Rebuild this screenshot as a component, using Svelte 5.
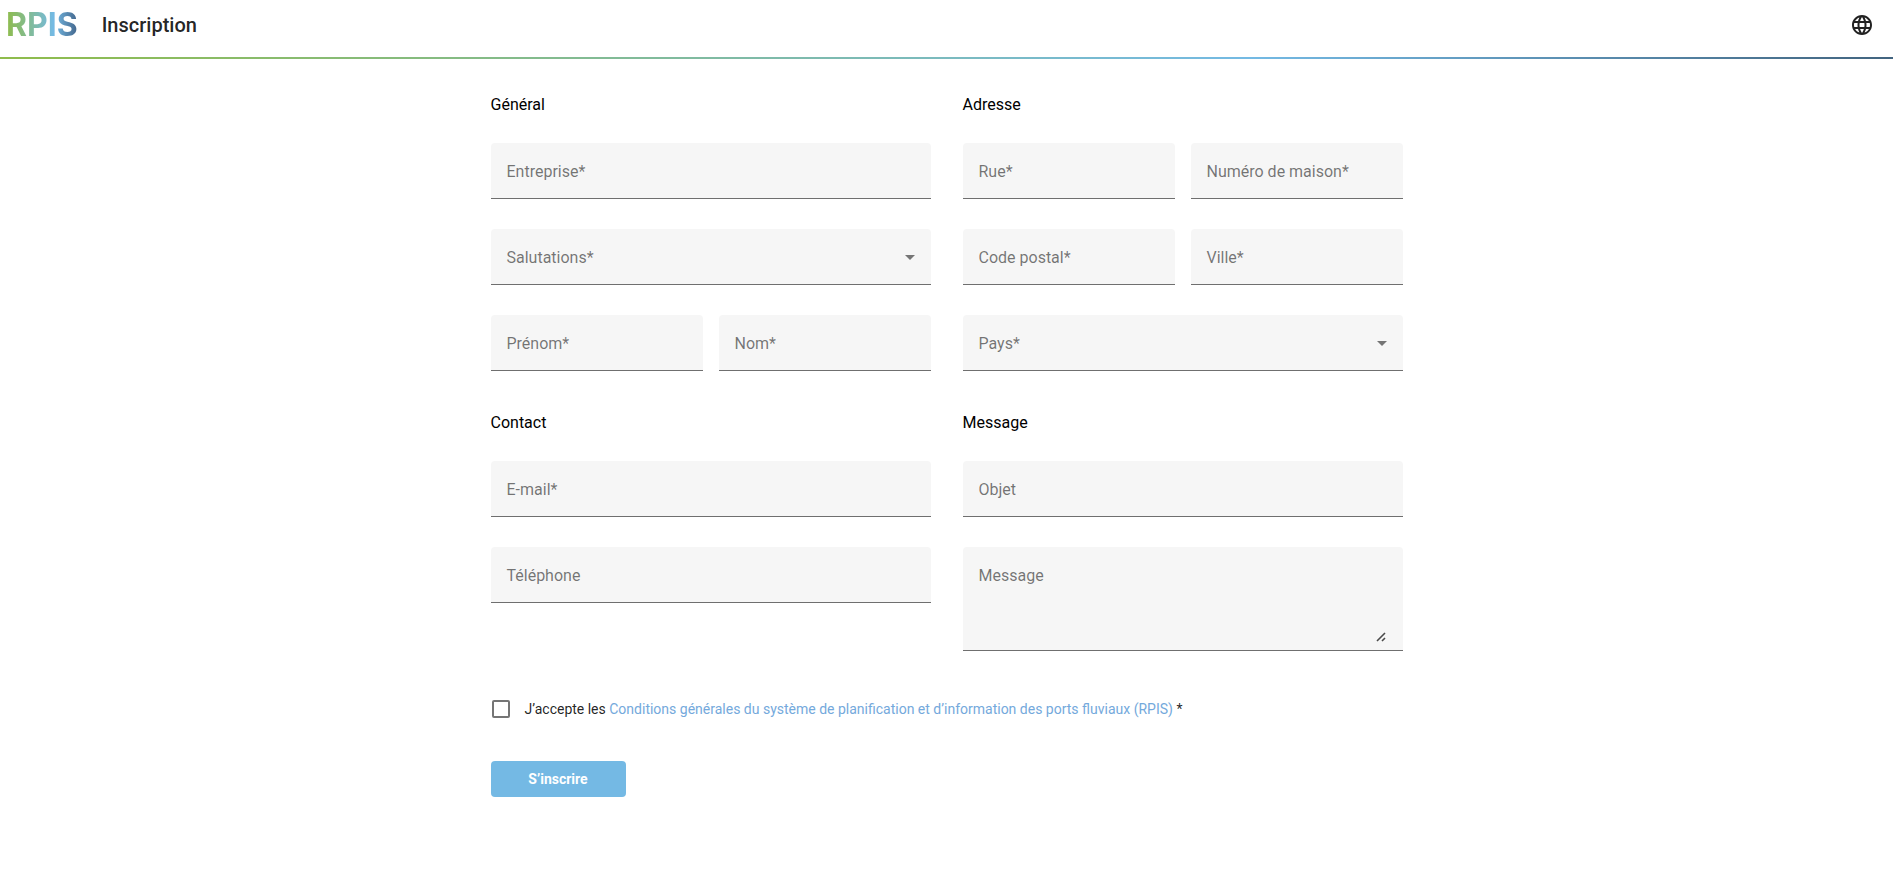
<script>
    const sections = [
        {
            title: 'Général',
            fields: [
                { id: 'company', label: 'Entreprise*' },
                { id: 'salutation', label: 'Salutations*', type: 'select', options: ['Madame', 'Monsieur'] },
                { id: 'firstName', label: 'Prénom*', half: true },
                { id: 'lastName', label: 'Nom*', half: true }
            ]
        },
        {
            title: 'Adresse',
            fields: [
                { id: 'street', label: 'Rue*', half: true },
                { id: 'houseNumber', label: 'Numéro de maison*', half: true },
                { id: 'zip', label: 'Code postal*', half: true },
                { id: 'city', label: 'Ville*', half: true },
                { id: 'country', label: 'Pays*', type: 'select', options: ['Allemagne', 'France', 'Suisse'] }
            ]
        },
        {
            title: 'Contact',
            fields: [
                { id: 'email', label: 'E-mail*' },
                { id: 'phone', label: 'Téléphone' }
            ]
        },
        {
            title: 'Message',
            fields: [
                { id: 'subject', label: 'Objet' },
                { id: 'message', label: 'Message', type: 'textarea' }
            ]
        }
    ];

    let values = $state({
        company: '', salutation: '', firstName: '', lastName: '',
        street: '', houseNumber: '', zip: '', city: '', country: '',
        email: '', phone: '', subject: '', message: ''
    });
    let accepted = $state(false);
</script>

<header class="toolbar">
    <a class="logo" href="/">RPIS</a>
    <h1>Inscription</h1>
    <button class="language" type="button" aria-label="Langue">
        <svg viewBox="0 0 24 24" width="24" height="24">
            <path d="M11.99 2C6.47 2 2 6.48 2 12s4.47 10 9.99 10C17.52 22 22 17.52 22 12S17.52 2 11.99 2zm6.93 6h-2.95c-.32-1.25-.78-2.45-1.38-3.56 1.84.63 3.37 1.91 4.33 3.56zM12 4.04c.83 1.2 1.48 2.53 1.91 3.96h-3.82c.43-1.43 1.08-2.76 1.91-3.96zM4.26 14C4.1 13.36 4 12.69 4 12s.1-1.36.26-2h3.38c-.08.66-.14 1.32-.14 2s.06 1.34.14 2H4.26zm.82 2h2.95c.32 1.25.78 2.45 1.38 3.56-1.84-.63-3.37-1.9-4.33-3.56zm2.95-8H5.08c.96-1.66 2.49-2.93 4.33-3.56C8.81 5.55 8.35 6.75 8.03 8zM12 19.96c-.83-1.2-1.48-2.53-1.91-3.96h3.82c-.43 1.43-1.08 2.76-1.91 3.96zM14.34 14H9.66c-.09-.66-.16-1.32-.16-2s.07-1.35.16-2h4.68c.09.65.16 1.32.16 2s-.07 1.34-.16 2zm.25 5.56c.6-1.11 1.06-2.31 1.38-3.56h2.95c-.96 1.65-2.49 2.93-4.33 3.56zM16.36 14c.08-.66.14-1.32.14-2s-.06-1.34-.14-2h3.38c.16.64.26 1.31.26 2s-.1 1.36-.26 2h-3.38z" />
        </svg>
    </button>
</header>

<main>
    <form onsubmit={(e) => e.preventDefault()}>
        <div class="sections">
            {#each sections as section}
                <section>
                    <h2>{section.title}</h2>
                    <div class="fields">
                        {#each section.fields as field}
                            <div class="field" class:half={field.half} class:filled={values[field.id]}>
                                {#if field.type === 'select'}
                                    <select id={field.id} bind:value={values[field.id]}>
                                        <option value=""></option>
                                        {#each field.options as option}
                                            <option>{option}</option>
                                        {/each}
                                    </select>
                                    <svg class="arrow" viewBox="0 0 10 5" width="10" height="5"><path d="M0 0h10L5 5z" /></svg>
                                {:else if field.type === 'textarea'}
                                    <textarea id={field.id} bind:value={values[field.id]}></textarea>
                                    <svg class="grip" viewBox="0 0 10 10" width="10" height="10"><path d="M1 9l8-8M6 9l3-3" /></svg>
                                {:else}
                                    <input id={field.id} type="text" bind:value={values[field.id]}>
                                {/if}
                                <label for={field.id}>{field.label}</label>
                            </div>
                        {/each}
                    </div>
                </section>
            {/each}
        </div>

        <div class="terms">
            <input id="terms" type="checkbox" bind:checked={accepted}>
            <label for="terms">J’accepte les <a href="/terms">Conditions générales du système de planification et d’information des ports fluviaux (RPIS)</a> *</label>
        </div>

        <button class="submit" type="submit">S’inscrire</button>
    </form>
</main>

<style>
    :global(body) {
        background: #fff;
        font-family: Roboto, "Liberation Sans", sans-serif;
        font-size: 16px;
        line-height: 24px;
    }
    .toolbar {
        display: flex;
        align-items: center;
        height: 50px;
        padding: 0 19px 7px 6px;
        border-bottom: 2px solid;
        border-image: linear-gradient(90deg, #8fbc4b, #74bae4 66%, #42647f) 1;
    }
    .logo {
        margin-right: 24px;
        background: linear-gradient(90deg, #8fbc4b, #74bae4 66%, #42648a);
        background-clip: text;
        color: transparent;
        font-family: Inter, sans-serif;
        font-size: 32px;
        line-height: 40px;
        font-weight: 700;
        text-decoration: none;
    }
    h1 {
        margin: 0;
        color: rgba(0, 0, 0, 0.87);
        font-size: 20px;
        font-weight: 500;
    }
    .language {
        display: flex;
        margin-left: auto;
        padding: 0;
        border: none;
        background: none;
        cursor: pointer;
    }
    .language svg {
        fill: #212121;
    }

    form {
        max-width: 912px;
        margin: 0 auto;
        padding: 34px 16px;
    }
    .sections {
        display: grid;
        grid-template-columns: 1fr 1fr;
        gap: 40px 32px;
    }
    h2 {
        margin: 0 0 26px;
        color: #000;
        font-size: 16px;
        font-weight: 400;
    }
    .fields {
        display: grid;
        grid-template-columns: 1fr 1fr;
        gap: 30px 16px;
    }
    .field {
        position: relative;
        grid-column: span 2;
        border-bottom: 1px solid #6f6f6f;
        border-radius: 4px 4px 0 0;
        background: #f6f6f6;
    }
    .field.half {
        grid-column: span 1;
    }
    .field label {
        position: absolute;
        top: 17px;
        left: 16px;
        color: rgba(0, 0, 0, 0.54);
        pointer-events: none;
        transition: .15s;
    }
    .field:focus-within label,
    .field.filled label {
        top: 4px;
        font-size: 12px;
        line-height: 16px;
    }
    .field input,
    .field select,
    .field textarea {
        display: block;
        box-sizing: border-box;
        width: 100%;
        height: 55px;
        padding: 20px 16px 4px;
        border: none;
        outline: none;
        background: none;
        font: inherit;
        appearance: none;
    }
    .field textarea {
        width: calc(100% - 16px);
        height: 72px;
        margin: 24px 16px 7px 0;
        padding: 0 0 0 16px;
        resize: vertical;
    }
    .field textarea::-webkit-resizer {
        background: none;
    }
    .arrow,
    .grip {
        position: absolute;
        right: 16px;
        pointer-events: none;
    }
    .arrow {
        top: 26px;
        fill: #757575;
    }
    .grip {
        right: 17px;
        bottom: 8px;
        fill: none;
        stroke: #4a4a4a;
        stroke-width: 1.6;
    }

    .terms {
        display: flex;
        align-items: center;
        gap: 15px;
        margin: 46px 0 40px 1px;
        color: rgba(0, 0, 0, 0.87);
        font-size: 14px;
    }
    .terms input {
        box-sizing: border-box;
        flex: none;
        width: 18px;
        height: 18px;
        margin: 0;
        border: 2px solid #757575;
        border-radius: 2px;
        appearance: none;
    }
    .terms input:checked {
        background: #74b9e4;
        border-color: #74b9e4;
    }
    .terms a {
        color: #74a9dc;
        text-decoration: none;
    }
    .submit {
        min-width: 135px;
        height: 36px;
        padding: 0 32px;
        border: none;
        border-radius: 4px;
        background: #74b9e4;
        color: #fff;
        font: inherit;
        font-size: 14px;
        font-weight: 700;
        cursor: pointer;
    }

    @media (max-width: 800px) {
        .sections {
            grid-template-columns: 1fr;
        }
    }
</style>
